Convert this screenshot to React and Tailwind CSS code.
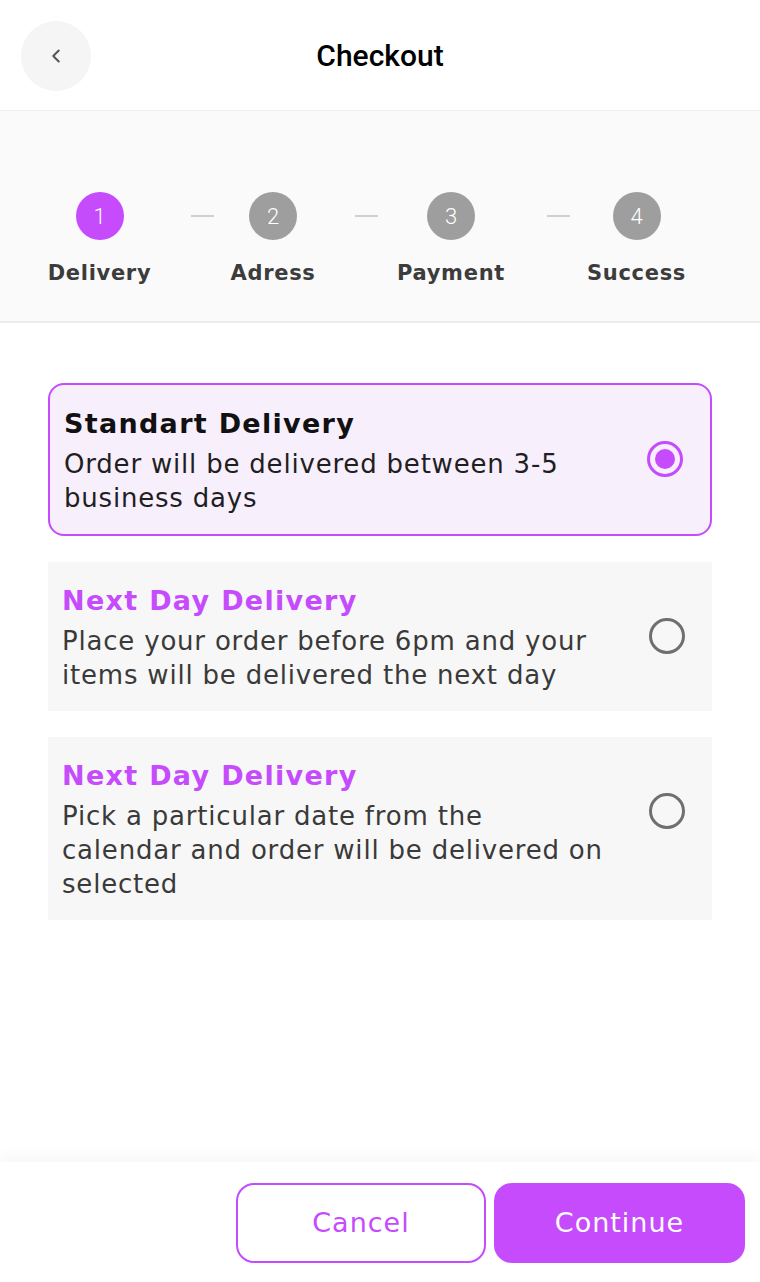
import { ChevronLeft } from 'lucide-react';

const steps = [
  { n: 1, label: 'Delivery', w: 'w-[103px]', active: true },
  { n: 2, label: 'Adress', w: 'w-[84px]' },
  { n: 3, label: 'Payment', w: 'w-[112px]' },
  { n: 4, label: 'Success', w: 'w-[99px]' },
];

const options = [
  {
    title: 'Standart Delivery',
    text: 'Order will be delivered between 3-5 business days',
    selected: true,
  },
  {
    title: 'Next Day Delivery',
    text: 'Place your order before 6pm and your items will be delivered the next day',
  },
  {
    title: 'Next Day Delivery',
    text: 'Pick a particular date from the calendar and order will be delivered on selected',
  },
];

function Stepper() {
  return (
    <div className="bg-[#fafafa] border-b-2 border-[#ececec] pt-[81px] h-[212px]">
      <div className="flex pl-[48px]">
        {steps.map((s, i) => (
          <div key={s.n} className="flex">
            <div className={`${s.w} flex flex-col items-center`}>
              <div
                className={`w-[48px] h-[48px] rounded-full flex items-center justify-center text-white text-[22px] font-light ${
                  s.active ? 'bg-[#c54bfc]' : 'bg-[#9e9e9e]'
                }`}
                style={{ fontFamily: 'Roboto, sans-serif' }}
              >
                {s.n}
              </div>
              <div className="mt-[18px] whitespace-nowrap text-[21px] leading-[30px] font-bold tracking-[0.7px] text-[#3c3c3c]">
                {s.label}
              </div>
            </div>
            {i < steps.length - 1 && (
              <div className="w-[80px] pt-[23px]">
                <div className="ml-[40px] w-[23px] h-[2px] bg-[#cfcfcf]" />
              </div>
            )}
          </div>
        ))}
      </div>
    </div>
  );
}

function Radio({ selected }) {
  return (
    <div
      className={`w-[36px] h-[36px] rounded-full border-[3px] flex items-center justify-center shrink-0 ${
        selected ? 'border-[#c54bfc]' : 'border-[#6f6f6f]'
      }`}
    >
      {selected && <div className="w-[20px] h-[20px] rounded-full bg-[#c54bfc]" />}
    </div>
  );
}

function Option({ title, text, selected }) {
  return (
    <div
      className={`flex items-start justify-between pt-[21px] pb-[19px] pl-[14px] pr-[27px] ${
        selected
          ? 'border-2 border-[#c54bfc] bg-[#f8effd] rounded-[16px] pl-[13px] pb-[18px]'
          : 'bg-[#f7f7f7]'
      }`}
    >
      <div className="w-[545px]">
        <div
          className={`text-[27px] leading-[36px] font-bold tracking-[1.3px] ${
            selected ? 'text-[#111]' : 'text-[#c54bfc]'
          }`}
        >
          {title}
        </div>
        <div
          className={`mt-[5px] text-[26px] leading-[34px] tracking-[0.8px] ${
            selected ? 'text-[#1f1f1f]' : 'text-[#3a3a3a]'
          }`}
        >
          {text}
        </div>
      </div>
      <div className="mt-[35px]">
        <Radio selected={selected} />
      </div>
    </div>
  );
}

export default function App() {
  return (
    <div
      className="w-[760px] h-[1282px] flex flex-col bg-white"
      style={{ fontFamily: '"DejaVu Sans", "Open Sans", sans-serif' }}
    >
      <header className="relative h-[111px] shrink-0 flex items-center justify-center border-b border-[#efefef]">
        <button className="absolute left-[21px] top-[21px] w-[70px] h-[70px] rounded-full bg-[#f5f5f5] flex items-center justify-center text-[#555]">
          <ChevronLeft size={22} strokeWidth={2.2} />
        </button>
        <h1
          className="text-[30px] font-medium text-black"
          style={{ fontFamily: 'Roboto, sans-serif' }}
        >
          Checkout
        </h1>
      </header>

      <Stepper />

      <main className="flex-1 px-[48px] pt-[60px] flex flex-col gap-[26px]">
        {options.map((o, i) => (
          <Option key={i} {...o} />
        ))}
      </main>

      <footer className="shrink-0 h-[120px] bg-white shadow-[0_-6px_12px_rgba(0,0,0,0.035)] flex justify-end items-start gap-[8px] pt-[21px] pr-[15px]">
        <button className="w-[250px] h-[80px] rounded-[18px] border-2 border-[#c54bfc] text-[#c54bfc] text-[27px] tracking-[1px]">
          Cancel
        </button>
        <button className="w-[251px] h-[80px] rounded-[18px] bg-[#c54bfc] text-white text-[27px] tracking-[1px]">
          Continue
        </button>
      </footer>
    </div>
  );
}
